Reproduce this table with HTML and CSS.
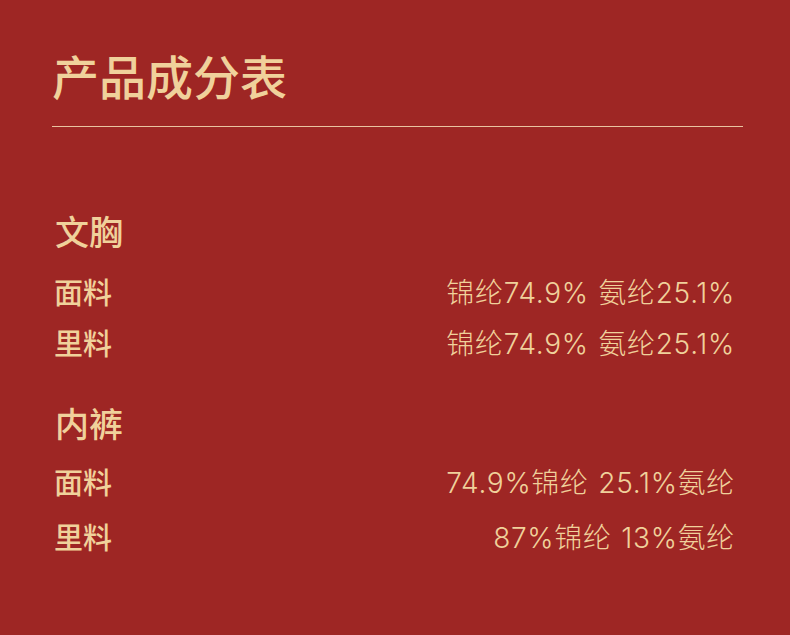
FILE: index.html
```html
<!DOCTYPE html>
<html lang="zh">
<head>
<meta charset="utf-8">
<link rel="stylesheet" href="styles.css">
</head>
<body>
<div class="page">
  <h1 class="title">产品成分表</h1>
  <div class="rule"></div>
  <section class="group group-first">
    <h2 class="group-name">文胸</h2>
    <div class="row"><span class="label">面料</span><span class="value">锦纶74.9% 氨纶25.1%</span></div>
    <div class="row"><span class="label">里料</span><span class="value">锦纶74.9% 氨纶25.1%</span></div>
  </section>
  <section class="group group-second">
    <h2 class="group-name">内裤</h2>
    <div class="row"><span class="label">面料</span><span class="value">74.9%锦纶 25.1%氨纶</span></div>
    <div class="row"><span class="label">里料</span><span class="value">87%锦纶 13%氨纶</span></div>
  </section>
</div>
</body>
</html>
```
FILE: styles.css
```css
html, body {
  margin: 0;
  padding: 0;
}
body {
  width: 790px;
  height: 635px;
  background: #9e2624;
  color: #f0d19b;
  font-family: "Noto Sans CJK SC", "Noto Sans", sans-serif;
  overflow: hidden;
}
.page {
  padding: 47px 47px 0 52px;
}
.title {
  margin: 0;
  font-size: 47px;
  font-weight: 500;
  line-height: 56px;
}
.rule {
  margin-top: 23px;
  height: 1px;
  background: #e9c3a0;
}
.group-first {
  margin-top: 84px;
}
.group-second {
  margin-top: 36px;
}
.group-name {
  margin: 0 0 14px 3px;
  font-size: 34px;
  font-weight: 500;
  line-height: 40px;
}
.group-second .group-name {
  margin-bottom: 10px;
}
.row {
  display: flex;
  justify-content: space-between;
  align-items: center;
  height: 51px;
  padding-right: 9px;
}
.group-second .row {
  height: 55px;
}
.label {
  font-size: 29px;
  font-weight: 500;
  margin-left: 2px;
}
.value {
  font-family: "Inter", "Noto Sans CJK SC", sans-serif;
  font-size: 28px;
  font-weight: 300;
  letter-spacing: 0.7px;
  word-spacing: 1px;
  margin-right: -1px;
}
```
